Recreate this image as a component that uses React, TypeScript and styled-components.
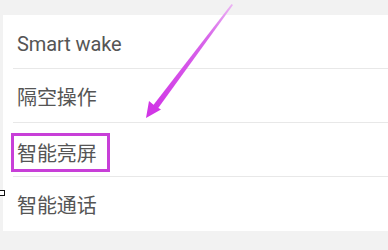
import React from "react";
import styled, { createGlobalStyle } from "styled-components";

const GlobalStyle = createGlobalStyle`
  html, body {
    margin: 0;
    padding: 0;
    background: #f2f2f2;
    overflow: hidden;
  }
  body {
    font-family: Roboto, "Noto Sans CJK SC", "Liberation Sans", sans-serif;
  }
`;

const Screen = styled.div`
  position: relative;
  width: 388px;
  height: 250px;
  overflow: hidden;
  background: #f2f2f2;
  padding-top: 15px;
  box-sizing: border-box;
`;

const Card = styled.div`
  margin-left: 3px;
  background: #ffffff;
  display: flex;
  flex-direction: column;
`;

const Row = styled.div<{ $last?: boolean }>`
  height: 54px;
  margin-left: 10px;
  padding-top: 4px;
  display: flex;
  align-items: center;
  border-bottom: ${(p) => (p.$last ? "none" : "1.5px solid #e8e8e8")};
  box-sizing: border-box;
`;

const Label = styled.span<{ $marked?: boolean }>`
  font-size: 20px;
  color: #555555;
  letter-spacing: -0.1px;
  line-height: 1;
  box-sizing: border-box;
  ${(p) =>
    p.$marked
      ? `
    display: inline-block;
    width: 99px;
    height: 39px;
    margin-left: -2px;
    margin-top: 2px;
    padding: 8px 0 0 3px;
    border: 3px solid #c83fd8;
  `
      : `margin-left: 4px;`}
`;

const Marker = styled.div`
  position: absolute;
  left: -1px;
  top: 190px;
  width: 4px;
  height: 4px;
  border: 1.5px solid #111;
  background: #fff;
`;

const ArrowLayer = styled.svg`
  position: absolute;
  left: 0;
  top: 0;
  pointer-events: none;
`;

const items = ["Smart wake", "隔空操作", "智能亮屏", "智能通话"];

export default function App() {
  return (
    <Screen>
      <GlobalStyle />
      <Card>
        {items.map((t, i) => (
          <Row key={t} $last={i === items.length - 1}>
            <Label $marked={i === 2}>{t}</Label>
          </Row>
        ))}
      </Card>
      <Marker />
      <ArrowLayer width="388" height="250" viewBox="0 0 388 250">
        <defs>
          <linearGradient id="shaft" x1="232" y1="4" x2="152" y2="110" gradientUnits="userSpaceOnUse">
            <stop offset="0" stopColor="#ecb4f4" />
            <stop offset="0.3" stopColor="#d868ea" />
            <stop offset="1" stopColor="#d136e6" />
          </linearGradient>
        </defs>
        <polygon points="231.5,4 233,5 157.5,109 153,105.5" fill="url(#shaft)" />
        <polygon points="146,118 149,101 155,106 161,109.5" fill="#d136e6" />
      </ArrowLayer>
    </Screen>
  );
}
